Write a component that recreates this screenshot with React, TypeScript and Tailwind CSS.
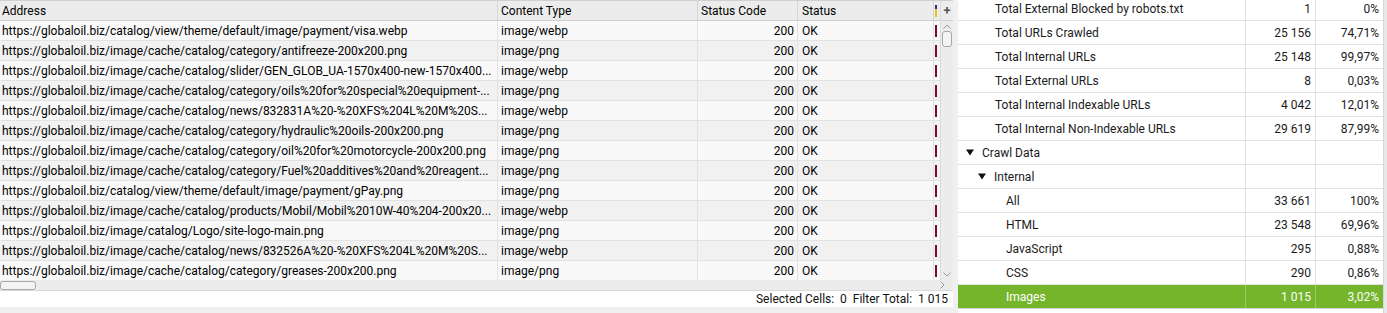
import React from "react";

const rows: [string, string][] = [
  ["https://globaloil.biz/catalog/view/theme/default/image/payment/visa.webp", "image/webp"],
  ["https://globaloil.biz/image/cache/catalog/category/antifreeze-200x200.png", "image/png"],
  ["https://globaloil.biz/image/cache/catalog/slider/GEN_GLOB_UA-1570x400-new-1570x400...", "image/webp"],
  ["https://globaloil.biz/image/cache/catalog/category/oils%20for%20special%20equipment-...", "image/png"],
  ["https://globaloil.biz/image/cache/catalog/news/832831A%20-%20XFS%204L%20M%20S...", "image/webp"],
  ["https://globaloil.biz/image/cache/catalog/category/hydraulic%20oils-200x200.png", "image/png"],
  ["https://globaloil.biz/image/cache/catalog/category/oil%20for%20motorcycle-200x200.png", "image/png"],
  ["https://globaloil.biz/image/cache/catalog/category/Fuel%20additives%20and%20reagent...", "image/png"],
  ["https://globaloil.biz/catalog/view/theme/default/image/payment/gPay.png", "image/png"],
  ["https://globaloil.biz/image/cache/catalog/products/Mobil/Mobil%2010W-40%204-200x20...", "image/webp"],
  ["https://globaloil.biz/image/catalog/Logo/site-logo-main.png", "image/png"],
  ["https://globaloil.biz/image/cache/catalog/news/832526A%20-%20XFS%204L%20M%20S...", "image/webp"],
  ["https://globaloil.biz/image/cache/catalog/category/greases-200x200.png", "image/png"],
];

type R = { label: string; indent: number; tri?: boolean; v?: string; p?: string; sel?: boolean };
const stats: R[] = [
  { label: "Total External Blocked by robots.txt", indent: 37, v: "1", p: "0%" },
  { label: "Total URLs Crawled", indent: 37, v: "25 156", p: "74,71%" },
  { label: "Total Internal URLs", indent: 37, v: "25 148", p: "99,97%" },
  { label: "Total External URLs", indent: 37, v: "8", p: "0,03%" },
  { label: "Total Internal Indexable URLs", indent: 37, v: "4 042", p: "12,01%" },
  { label: "Total Internal Non-Indexable URLs", indent: 37, v: "29 619", p: "87,99%" },
  { label: "Crawl Data", indent: 8, tri: true },
  { label: "Internal", indent: 20, tri: true },
  { label: "All", indent: 48, v: "33 661", p: "100%" },
  { label: "HTML", indent: 48, v: "23 548", p: "69,96%" },
  { label: "JavaScript", indent: 48, v: "295", p: "0,88%" },
  { label: "CSS", indent: 48, v: "290", p: "0,86%" },
  { label: "Images", indent: 48, v: "1 015", p: "3,02%", sel: true },
];

function Tri() {
  return (
    <svg width="8" height="7" viewBox="0 0 8 7" className="mr-[8px] shrink-0">
      <path d="M0 0.5 L8 0.5 L4 6.5 Z" fill="#111" />
    </svg>
  );
}

export default function App() {
  return (
    <div
      className="flex w-[1387px] h-[313px] bg-[#f0f0f0] overflow-hidden text-[12px] text-black"
      style={{ fontFamily: "Roboto, 'Liberation Sans', sans-serif" }}
    >
      {/* Left panel */}
      <div className="flex flex-col w-[953px] shrink-0">
        <div className="flex h-[280px] bg-white border-t border-[#d0d0d0]">
          <div className="flex flex-col w-[940px] overflow-hidden">
            {/* header */}
            <div className="flex h-[20px] shrink-0 bg-[#ececec] border-b border-[#cfcfcf] items-center leading-none">
              <div className="w-[498px] pl-[2px] border-r border-[#d6d6d6] h-full flex items-center">Address</div>
              <div className="w-[200px] pl-[3px] border-r border-[#d6d6d6] h-full flex items-center">Content Type</div>
              <div className="w-[100px] pl-[3px] border-r border-[#d6d6d6] h-full flex items-center">Status Code</div>
              <div className="w-[136px] pl-[4px] border-r border-[#d6d6d6] h-full flex items-center">Status</div>
              <div className="w-[6px] h-full flex items-center pl-[1px]">
                <div className="w-[2px] h-[12px] flex flex-col">
                  <div className="h-[4px] bg-[#2a2a8a]" />
                  <div className="h-[8px] bg-[#e8c020]" />
                </div>
              </div>
            </div>
            {rows.map(([a, t], i) => (
              <div
                key={i}
                className={`flex h-[20px] shrink-0 border-b border-[#e2e2e2] items-center ${
                  i % 2 === 0 ? "bg-[#f9f9f9]" : "bg-[#f1f1f1]"
                }`}
              >
                <div className="w-[498px] pl-[2px] border-r border-[#e2e2e2] h-full flex items-center whitespace-nowrap overflow-hidden">
                  {a}
                </div>
                <div className="w-[200px] pl-[3px] border-r border-[#e2e2e2] h-full flex items-center">{t}</div>
                <div className="w-[100px] pr-[3px] border-r border-[#e2e2e2] h-full flex items-center justify-end">200</div>
                <div className="w-[136px] pl-[4px] border-r border-[#e2e2e2] h-full flex items-center">OK</div>
                <div className="w-[6px] h-full flex items-center pl-[1px]">
                  <div className="w-[2px] h-[12px] bg-[#7a0a2a]" />
                </div>
              </div>
            ))}
          </div>
          {/* vertical scrollbar */}
          <div className="w-[13px] flex flex-col bg-[#ececec] border-l border-[#dcdcdc]">
            <div className="h-[20px] flex items-center justify-center border-b border-[#cfcfcf] text-[#555] text-[13px] font-bold leading-none">
              +
            </div>
            <div className="h-[10px] flex items-center justify-center">
              <svg width="8" height="5" viewBox="0 0 8 5">
                <path d="M0.5 4.5 L4 1 L7.5 4.5" stroke="#9a9a9a" fill="none" />
              </svg>
            </div>
            <div className="mx-[1px] h-[16px] rounded-[3px] border border-[#a8a8a8] bg-[#f4f4f4]" />
            <div className="flex-1" />
            <div className="h-[12px] flex items-center justify-center">
              <svg width="8" height="5" viewBox="0 0 8 5">
                <path d="M0.5 0.5 L4 4 L7.5 0.5" stroke="#9a9a9a" fill="none" />
              </svg>
            </div>
          </div>
        </div>
        {/* horizontal scrollbar */}
        <div className="h-[11px] bg-[#ececec] border-b border-[#d8d8d8] flex items-center">
          <div className="ml-0 w-[36px] h-[9px] rounded-[3px] border border-[#a8a8a8] bg-[#f4f4f4]" />
          <div className="flex-1" />
          <div className="w-[14px] mr-[4px] flex items-center justify-center">
            <svg width="5" height="8" viewBox="0 0 5 8">
              <path d="M0.5 0.5 L4 4 L0.5 7.5" stroke="#9a9a9a" fill="none" />
            </svg>
          </div>
        </div>
        {/* status bar */}
        <div className="h-[16px] bg-white flex items-center justify-end pr-[5px] text-[12px] text-[#111] leading-none">
          <span>Selected Cells:&nbsp; 0&nbsp; Filter Total:&nbsp; 1 015</span>
        </div>
        <div className="flex-1" />
      </div>

      {/* gap */}
      <div className="w-[5px] shrink-0 bg-[#f0f0f0]" />

      {/* Right panel */}
      <div className="flex flex-1 bg-white overflow-hidden">
        <div className="flex-1 flex flex-col -mt-[3px] text-[#1b1b1b]">
          {stats.map((s, i) => (
            <div
              key={i}
              className={`flex h-[24px] shrink-0 border-b ${
                s.sel ? "bg-[#74b52b] text-white border-[#d6d6d6]" : "border-[#e2e2e2]"
              }`}
            >
              <div
                className={`w-[288px] flex items-center border-r ${s.sel ? "border-[#9ccb66]" : "border-[#e2e2e2]"}`}
                style={{ paddingLeft: s.indent }}
              >
                {s.tri && <Tri />}
                {s.label}
              </div>
              <div
                className={`w-[70px] flex items-center justify-end pr-[4px] border-r ${
                  s.sel ? "border-[#9ccb66]" : "border-[#e2e2e2]"
                }`}
              >
                {s.v}
              </div>
              <div className="w-[67px] flex items-center justify-end pr-[4px]">{s.p}</div>
            </div>
          ))}
        </div>
        <div className="w-[4px] bg-[#e8e8e8] border-l border-[#d8d8d8]" />
      </div>
    </div>
  );
}
